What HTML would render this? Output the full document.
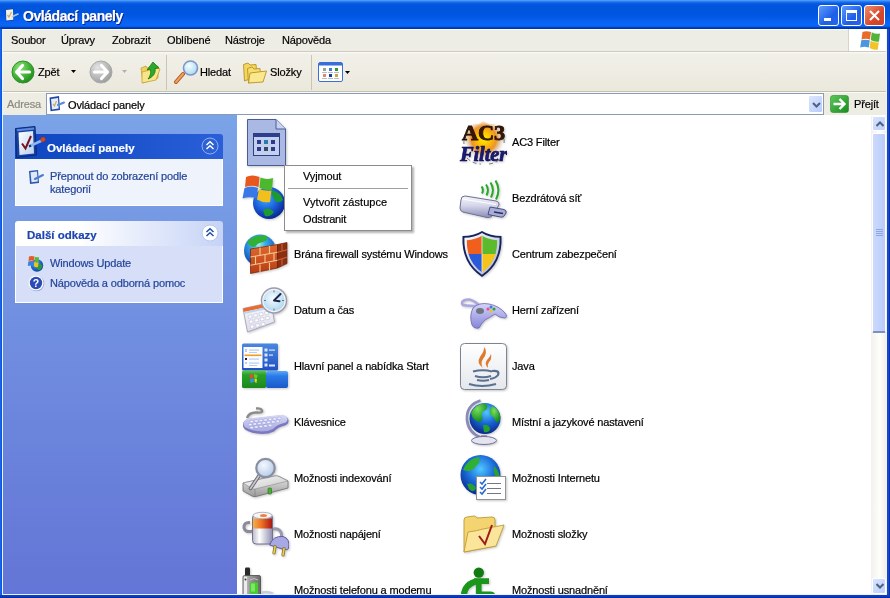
<!DOCTYPE html>
<html><head><meta charset="utf-8">
<style>
*{margin:0;padding:0;box-sizing:border-box}
html,body{width:890px;height:598px;overflow:hidden;background:#0054E3}
body{position:relative;font-family:"Liberation Sans",sans-serif;font-size:11px;color:#000;letter-spacing:-0.15px}
.a{position:absolute}
.t{position:absolute;white-space:nowrap;line-height:13px;will-change:transform;-webkit-text-stroke:0.2px currentColor}
#title{left:0;top:0;width:890px;height:29px;background:linear-gradient(#5aa4fc 0px,#3a8cf6 1px,#1a70ee 2px,#0a5ae2 3.5px,#0054dc 6px,#0056e0 15px,#0860f0 21px,#0a66f6 25px,#0a5cea 26.5px,#0040b8 27.5px,#0034a0 29px)}
#title .tt{left:23px;top:10px;color:#fff;font-weight:bold;font-size:14px;letter-spacing:-0.45px;text-shadow:1px 1px 0 #0a1e80}
.wb{position:absolute;top:5px;width:21px;height:21px;border:1px solid #fff;border-radius:3px}
#menu{left:2px;top:29px;width:885px;height:23px;background:#eeede5;box-shadow:inset 0 1px #fcfcfa;border-bottom:1px solid #cfccbf}
#menu .t{top:5px}
#tb{left:2px;top:52px;width:885px;height:40px;background:linear-gradient(#fbfaf6 0,#f1f0e8 2px,#eeece2 60%,#ebe9dc 95%);border-bottom:1px solid #c4c1b4}
#addr{left:2px;top:92px;width:885px;height:23px;background:#eeede4;box-shadow:inset 0 1px #fafaf6}
#left{left:2px;top:115px;width:235px;height:479px;background:linear-gradient(#7ba3e8,#6375d6)}
#list{left:237px;top:115px;width:633px;height:479px;background:#fff}
#sb{left:870px;top:115px;width:17px;height:479px;background:#fff}
#bottom{left:0;top:595px;width:890px;height:3px;background:linear-gradient(#1040c0,#0a38b8 60%,#0028a0)}
.it{position:absolute;top:0;width:48px;height:48px}
svg{will-change:transform}
</style></head><body>
<div id="title" class="a">
  <svg class="a" style="left:4px;top:7px" width="16" height="16" viewBox="0 0 16 16">
    <path d="M1.5 2.5 L9.5 1.5 L10 13.5 L2 14.5Z" fill="#1a3a9a" opacity=".7"/>
    <path d="M2 3 L9 2.2 L9.3 12.8 L2.3 13.6Z" fill="#f2f2ea"/>
    <path d="M3.5 8 L5 10 L7.5 5" fill="none" stroke="#c8b070" stroke-width="1.3"/>
    <path d="M8.5 9.5 L14 7" stroke="#a8c8f0" stroke-width="1.6" stroke-linecap="round"/>
  </svg>
  <div class="t tt">Ovládací panely</div>
  <div class="wb" style="left:818px;background:linear-gradient(135deg,#5e9bff,#1f5fe8 60%,#2a65ec)"><div class="a" style="left:5px;top:12px;width:7px;height:3px;background:#fff"></div></div>
  <div class="wb" style="left:841px;background:linear-gradient(135deg,#5e9bff,#1f5fe8 60%,#2a65ec)"><div class="a" style="left:4px;top:4px;width:11px;height:11px;border:1px solid #fff;border-top-width:3px"></div></div>
  <div class="wb" style="left:864px;background:linear-gradient(135deg,#f08d6c,#d6482b 60%,#cf4126)"><svg class="a" style="left:4px;top:4px" width="11" height="11"><path d="M1 1 L10 10 M10 1 L1 10" stroke="#fff" stroke-width="2.1"/></svg></div>
</div>
<div id="menu" class="a">
  <div class="t" style="left:9px">Soubor</div>
  <div class="t" style="left:59px">Úpravy</div>
  <div class="t" style="left:110px">Zobrazit</div>
  <div class="t" style="left:165px">Oblíbené</div>
  <div class="t" style="left:223px">Nástroje</div>
  <div class="t" style="left:280px">Nápověda</div>
  <div class="a" style="left:846px;top:0;width:39px;height:22px;background:#fff;border-left:1px solid #d8d4c4"></div>
  <svg class="a" style="left:855px;top:1px" width="24" height="20" viewBox="0 0 24 20">
    <path d="M5.5 2 Q9 0.5 14 2 L13 9.5 Q9 8 4.5 9.5Z" fill="#ea6a2a"/>
    <path d="M14.7 2.3 Q18.5 4.5 23 3.5 L22 11.5 Q17.5 12.5 13.8 10Z" fill="#52b43a"/>
    <path d="M4.3 10.3 Q8.5 9 12.8 10.3 L11.8 17.5 Q7.5 16 3.2 17.5Z" fill="#4a96e0"/>
    <path d="M13.6 10.8 Q17.5 13 21.8 12.2 L20.8 19.5 Q16.5 20.5 12.6 18Z" fill="#f2c42a"/>
  </svg>
</div>
<div id="tb" class="a">
  <svg class="a" style="left:9px;top:8px" width="24" height="24" viewBox="0 0 24 24">
    <defs><radialGradient id="gb" cx="35%" cy="30%" r="75%"><stop offset="0" stop-color="#8fe27a"/><stop offset=".55" stop-color="#46b53a"/><stop offset="1" stop-color="#1f8a1e"/></radialGradient></defs>
    <circle cx="12" cy="12" r="11" fill="url(#gb)" stroke="#2f8f2a" stroke-width="1"/>
    <path d="M11.5 5.5 L5.5 12 L11.5 18.5 M6 12 H18.5" fill="none" stroke="#fff" stroke-width="3.2" stroke-linecap="round" stroke-linejoin="round"/>
  </svg>
  <div class="t" style="left:36px;top:14px">Zpět</div>
  <svg class="a" style="left:69px;top:18px" width="5" height="3"><path d="M0 0H5L2.5 3Z" fill="#000"/></svg>
  <svg class="a" style="left:87px;top:8px" width="24" height="24" viewBox="0 0 24 24">
    <defs><radialGradient id="gf" cx="35%" cy="30%" r="75%"><stop offset="0" stop-color="#e4e4e4"/><stop offset=".6" stop-color="#b9b9b9"/><stop offset="1" stop-color="#9a9a9a"/></radialGradient></defs>
    <circle cx="12" cy="12" r="11" fill="url(#gf)" stroke="#a8a8a8" stroke-width="1"/>
    <path d="M12.5 5.5 L18.5 12 L12.5 18.5 M18 12 H5.5" fill="none" stroke="#fff" stroke-width="3.2" stroke-linecap="round" stroke-linejoin="round"/>
  </svg>
  <svg class="a" style="left:120px;top:18px" width="5" height="3"><path d="M0 0H5L2.5 3Z" fill="#b0b0b0"/></svg>
  <svg class="a" style="left:137px;top:8px" width="22" height="24" viewBox="0 0 22 24">
    <path d="M2 8 L7 6 L8 8 L19 6 L19 18 L4 23 Z" fill="#f0d060" stroke="#c8a030" stroke-width=".8"/>
    <path d="M3 12 L19 8 L21 9 L17 20 L3 23 Z" fill="#f8e48a" stroke="#c8a030" stroke-width=".8"/>
    <path d="M9 19 C12 15 12 12 11 9 L8 10 L14 2 L20 8 L16 8.5 C17 13 14 17 9 19Z" fill="#2ea82a" stroke="#137a13" stroke-width=".8"/>
  </svg>
  <div class="a" style="left:164px;top:3px;width:1px;height:35px;background:#c8c5b5"></div>
  <svg class="a" style="left:169px;top:8px" width="28" height="24" viewBox="0 0 28 24">
    <defs><radialGradient id="gl" cx="40%" cy="35%" r="70%"><stop offset="0" stop-color="#f4ffff"/><stop offset="1" stop-color="#a9d6f0"/></radialGradient></defs>
    <path d="M5 22 L12 14" stroke="#b05a20" stroke-width="4" stroke-linecap="round"/>
    <path d="M5 22 L12 14" stroke="#f0a060" stroke-width="2" stroke-linecap="round"/>
    <circle cx="19.5" cy="8" r="7" fill="url(#gl)" stroke="#7d95c9" stroke-width="1.6"/>
  </svg>
  <div class="t" style="left:198px;top:14px">Hledat</div>
  <svg class="a" style="left:240px;top:10px" width="26" height="22" viewBox="0 0 26 22">
    <path d="M1.5 2.5 L6 1 L8 3 L14 2.5 L15 14 L2.5 19Z" fill="#f2d660" stroke="#b8921e" stroke-width=".9"/>
    <path d="M5.5 6.5 L10 5 L12 7 L18 6.5 L19 17 L6.5 21Z" fill="#f6de72" stroke="#b8921e" stroke-width=".9"/>
    <path d="M8 11 L24.5 9 L21 20 L6.5 21Z" fill="#fbe88e" stroke="#b8921e" stroke-width=".9"/>
  </svg>
  <div class="t" style="left:268px;top:14px">Složky</div>
  <div class="a" style="left:309px;top:3px;width:1px;height:35px;background:#c8c5b5"></div>
  <svg class="a" style="left:316px;top:10px" width="25" height="20" viewBox="0 0 25 20">
    <rect x=".5" y=".5" width="24" height="19" rx="1.5" fill="#fff" stroke="#3a6fd8"/>
    <rect x="1" y="1" width="23" height="2.5" fill="#3a6fd8"/>
    <rect x="5" y="6" width="3" height="3" fill="#9aa0a0"/><rect x="11" y="6" width="3" height="3" fill="#3c7ee0"/><rect x="17" y="6" width="3" height="3" fill="#2e9a2e"/>
    <rect x="5" y="12" width="3" height="3" fill="#d88a6a"/><rect x="11" y="12" width="3" height="3" fill="#1a3f9a"/><rect x="17" y="12" width="3" height="3" fill="#c0a850"/>
    <rect x="4" y="10" width="5" height=".8" fill="#aab"/><rect x="10" y="10" width="5" height=".8" fill="#aab"/><rect x="16" y="10" width="5" height=".8" fill="#aab"/>
    <rect x="4" y="16" width="5" height=".8" fill="#aab"/><rect x="10" y="16" width="5" height=".8" fill="#aab"/><rect x="16" y="16" width="5" height=".8" fill="#aab"/>
  </svg>
  <svg class="a" style="left:343px;top:19px" width="5" height="3"><path d="M0 0H5L2.5 3Z" fill="#000"/></svg>
</div>
<div id="addr" class="a">
  <div class="t" style="left:5px;top:6px;color:#8c8a80">Adresa</div>
  <div class="a" style="left:44px;top:1px;width:778px;height:22px;background:#fff;border:1px solid #8a9cb4"></div>
  <svg class="a" style="left:46px;top:3px" width="18" height="17" viewBox="0 0 18 17">
    <path d="M1.5 2.5 L11 1 L12 15 L2.5 16.2Z" fill="#2048a8"/>
    <path d="M3 4 L10 3 L10.7 13.6 L4 14.5Z" fill="#e4eefa"/>
    <path d="M5 9 L6.5 11 L8.5 6" fill="none" stroke="#d0b060" stroke-width="1.3"/>
    <path d="M10 10 L16 7.5" stroke="#5a8ad8" stroke-width="2" stroke-linecap="round"/>
  </svg>
  <div class="t" style="left:66px;top:7px">Ovládací panely</div>
  <div class="a" style="left:806px;top:3px;width:15px;height:18px;border-radius:2px;background:linear-gradient(135deg,#dce6fd,#b8ccfa);border:1px solid #fff"><svg class="a" style="left:3px;top:6px" width="9" height="6"><path d="M1 1 L4.5 4.5 L8 1" fill="none" stroke="#4d6185" stroke-width="2"/></svg></div>
  <svg class="a" style="left:828px;top:3px" width="19" height="18" viewBox="0 0 19 18">
    <defs><linearGradient id="gog" x1="0" y1="0" x2="1" y2="1"><stop offset="0" stop-color="#5cc85a"/><stop offset="1" stop-color="#1a8a20"/></linearGradient></defs>
    <rect x=".5" y=".5" width="18" height="17" rx="2.5" fill="url(#gog)" stroke="#2a8a2a" stroke-width=".6"/>
    <path d="M3.5 9 H14 M9.5 4 L14.5 9 L9.5 14" fill="none" stroke="#fff" stroke-width="2.4"/>
  </svg>
  <div class="t" style="left:852px;top:6px">Přejít</div>
</div>
<div id="left" class="a">
  <div class="a" style="left:13px;top:19px;width:208px;height:25px;background:linear-gradient(90deg,#0c45c0,#2a5fd8);border-radius:3px 3px 0 0"></div>
  <svg class="a" style="left:11px;top:10px" width="36" height="34" viewBox="0 0 36 34">
    <defs><linearGradient id="tabp" x1="0" y1="0" x2="1" y2="1"><stop offset="0" stop-color="#ffffff"/><stop offset="1" stop-color="#b8d0f0"/></linearGradient></defs>
    <path d="M2.5 3.5 L22 1.5 L23.5 30 L3.5 32.5Z" fill="#1840a0" stroke="#0a2878" stroke-width="1"/>
    <path d="M3.5 4.2 L21 2.5 L21.3 4.5 L4.5 6.2Z" fill="#5a8ae0"/>
    <path d="M5.5 7.5 L20 6 L21 28.5 L6.5 30Z" fill="url(#tabp)"/>
    <path d="M9 18.5 L12.5 23.5 L18 11" fill="none" stroke="#7a1020" stroke-width="2"/>
    <path d="M17 21 L30 15" stroke="#8ab8f0" stroke-width="2.6" stroke-linecap="round"/>
    <path d="M16 21.5 L18 20.5" stroke="#10306a" stroke-width="2"/>
    <circle cx="30" cy="14.5" r="2.4" fill="#d04a28" stroke="#a82a18" stroke-width=".6"/>
  </svg>
  <div class="t" style="left:45px;top:27px;color:#fff;font-weight:bold;font-size:11.5px;letter-spacing:0">Ovládací panely</div>
  <svg class="a" style="left:199px;top:22px" width="18" height="18" viewBox="0 0 18 18">
    <circle cx="9" cy="9" r="8" fill="#2d62d6" stroke="#8fb0f0" stroke-width="1"/>
    <path d="M5.5 8 L9 4.8 L12.5 8 M5.5 12 L9 8.8 L12.5 12" fill="none" stroke="#fff" stroke-width="1.5"/>
  </svg>
  <div class="a" style="left:13px;top:44px;width:208px;height:47px;background:#eff3fb;border:1px solid #fff;border-top:0"></div>
  <svg class="a" style="left:25px;top:54px" width="18" height="16" viewBox="0 0 18 16">
    <path d="M2 2 L11 1 L12 14 L3 15 Z" fill="#2a58b0"/>
    <path d="M3.5 3.2 L10 2.5 L10.8 12.5 L4.5 13.2Z" fill="#dfe8f6"/>
    <path d="M8 10 L16 6" stroke="#4a7ad0" stroke-width="2" stroke-linecap="round"/>
  </svg>
  <div class="t" style="left:48px;top:55px;color:#24449a;line-height:13px">Přepnout do zobrazení podle<br>kategorií</div>

  <div class="a" style="left:13px;top:106px;width:208px;height:25px;background:linear-gradient(90deg,#fff 30%,#c6d3f7);border-radius:3px 3px 0 0"></div>
  <div class="t" style="left:25px;top:114px;color:#1e44b0;font-weight:bold;font-size:11.5px;letter-spacing:0">Další odkazy</div>
  <svg class="a" style="left:199px;top:109px" width="18" height="18" viewBox="0 0 18 18">
    <circle cx="9" cy="9" r="8" fill="#fff" stroke="#b8c8e8" stroke-width="1"/>
    <path d="M5.5 8 L9 4.8 L12.5 8 M5.5 12 L9 8.8 L12.5 12" fill="none" stroke="#1f4ea8" stroke-width="1.5"/>
  </svg>
  <div class="a" style="left:13px;top:131px;width:208px;height:57px;background:#d6dff7;border:1px solid #fff;border-top:0"></div>
  <svg class="a" style="left:25px;top:140px" width="17" height="17" viewBox="0 0 17 17">
    <defs><radialGradient id="wus" cx="40%" cy="35%" r="70%"><stop offset="0" stop-color="#40a8f0"/><stop offset="1" stop-color="#0a3aa8"/></radialGradient></defs>
    <circle cx="10" cy="10.5" r="6.2" fill="url(#wus)"/>
    <path d="M8 10 Q11 8 15.5 10 Q15 14 12 15.5 Q9 14 8 10Z" fill="#2a9a3a"/>
    <path d="M2 1.5 Q4.5 0.5 7.5 1.5 L7 6 Q4.5 5 1.5 6Z" fill="#e85a28"/>
    <path d="M8 1.7 Q10 2.7 12 2 L11.5 7 Q9.5 7.5 7.5 6.3Z" fill="#58b830"/>
    <path d="M1.3 6.5 Q4 5.5 6.8 6.5 L6.3 11 Q3.5 10 0.8 11Z" fill="#3a80e0"/>
    <path d="M7.3 6.7 Q9.5 7.8 11.5 7.5 L11 12 Q9 12.5 6.8 11.3Z" fill="#f2c020"/>
  </svg>
  <div class="t" style="left:48px;top:142px;color:#24449a">Windows Update</div>
  <svg class="a" style="left:25px;top:159px" width="18" height="18" viewBox="0 0 18 18">
    <circle cx="9.5" cy="9.5" r="7.8" fill="#6a7ab0" opacity=".6"/>
    <circle cx="9" cy="9" r="7.6" fill="#fff"/>
    <circle cx="9" cy="9" r="6.2" fill="#2a4cb4"/>
    <text x="9" y="12.8" text-anchor="middle" font-family="Liberation Sans" font-weight="bold" font-size="10.5" fill="#fff">?</text>
  </svg>
  <div class="t" style="left:48px;top:162px;color:#24449a">Nápověda a odborná pomoc</div>
</div>
<div id="list" class="a" style="overflow:hidden">
<svg class="a" style="left:4px;top:3px;filter:drop-shadow(1px 1.5px 1px rgba(0,0,0,.22))" width="48" height="48" viewBox="0 0 48 48">
<path d="M6.5 1.5 H35 L44.5 11 V47.5 H6.5 Z" fill="#a9b9e4" stroke="#4b5c94"/>
<path d="M35 1.5 V11 H44.5" fill="#c7d3f0" stroke="#4b5c94"/>
<rect x="12.5" y="15.5" width="26" height="22" fill="#c3cfee" stroke="#2e3f80"/>
<rect x="13" y="16" width="25" height="3" fill="#2b3f90"/>
<g fill="#2f3a8a"><rect x="16" y="22" width="4" height="4"/><rect x="23" y="22" width="4" height="4" fill="#2a7ab0"/><rect x="30" y="22" width="4" height="4"/>
<rect x="16" y="29" width="4" height="4"/><rect x="23" y="29" width="4" height="4" fill="#3a4a60"/><rect x="30" y="29" width="4" height="4"/></g>
</svg>
<svg class="a" style="left:222px;top:3px;filter:drop-shadow(1px 1.5px 1px rgba(0,0,0,.22))" width="48" height="48" viewBox="0 0 48 48">
<defs><radialGradient id="ac3f" cx="50%" cy="45%" r="50%"><stop offset="0" stop-color="#fff200"/><stop offset=".35" stop-color="#ffc000"/><stop offset=".65" stop-color="#f08a10" stop-opacity=".85"/><stop offset=".9" stop-color="#f8c890" stop-opacity=".3"/><stop offset="1" stop-color="#fff" stop-opacity="0"/></radialGradient></defs>
<path d="M6 22 Q4 10 14 5 Q20 8 24 3 Q30 8 36 5 Q46 12 44 24 Q46 34 38 40 Q30 44 24 42 Q14 44 8 36 Q4 30 6 22Z" fill="url(#ac3f)"/>
<path d="M9 10 Q4 18 5 26 M40 8 Q46 16 45 26 M8 40 Q14 46 22 46 M30 46 Q38 45 42 40" fill="none" stroke="#444" stroke-width=".7" stroke-dasharray="4 3"/>
<text x="3" y="22" textLength="43" lengthAdjust="spacingAndGlyphs" font-family="Liberation Serif" font-weight="bold" font-size="21" fill="#3a1606" stroke="#241000" stroke-width=".8">AC3</text>
<text x="1" y="43" textLength="47" lengthAdjust="spacingAndGlyphs" font-family="Liberation Serif" font-weight="bold" font-style="italic" font-size="22" fill="#1a1a78" stroke="#0c0c50" stroke-width=".7">Filter</text>
</svg>
<div class="t" style="left:275px;top:21px">AC3 Filter</div>
<svg class="a" style="left:4px;top:59px;filter:drop-shadow(1px 1.5px 1px rgba(0,0,0,.22))" width="48" height="48" viewBox="0 0 48 48">
<defs><radialGradient id="wug" cx="40%" cy="35%" r="65%"><stop offset="0" stop-color="#3ab0ff"/><stop offset=".6" stop-color="#1a5ad8"/><stop offset="1" stop-color="#0a2a90"/></radialGradient></defs>
<circle cx="28" cy="29" r="16" fill="url(#wug)"/>
<path d="M30 16 Q40 18 42 26 Q38 30 34 27 Q31 22 30 16Z M22 36 Q28 32 33 38 Q30 43 24 42Z" fill="#1a9a30"/>
<path d="M5 3 Q11 0 18.5 3 L17.5 13 Q11 10.5 4 13Z" fill="#e8571c"/>
<path d="M19.5 3.5 Q25 6 32 4 L31 15.5 Q25 17 18.5 14Z" fill="#4cb82c"/>
<path d="M3.5 14 Q10 11.5 17 14 L15.5 24.5 Q9 22 1.5 24.5Z" fill="#3a78e8"/>
<path d="M18 15 Q24 17.5 30.5 16.5 L29 28 Q22 29 16 25.5Z" fill="#f2c01c"/>
</svg>
<svg class="a" style="left:222px;top:59px;filter:drop-shadow(1px 1.5px 1px rgba(0,0,0,.22))" width="48" height="48" viewBox="0 0 48 48">
<defs><linearGradient id="usbg" x1="0" y1="0" x2="0" y2="1"><stop offset="0" stop-color="#f8f8fc"/><stop offset=".45" stop-color="#d4d5ea"/><stop offset="1" stop-color="#8a8db8"/></linearGradient></defs>
<path d="M2 26 Q2 22 6 22 L37 27 Q41 28 40 31 L33 42 Q31 44 28 43.5 L4 38 Q1 37 1 34Z" fill="url(#usbg)" stroke="#6e7094" stroke-width="1"/>
<path d="M3 25 L37 30.5" stroke="#ffffff" stroke-width="1"/>
<path d="M31 33 L45 35.5 Q48 36.5 47 39 L45 42 Q44 43.5 41.5 43 L29 40.5Z" fill="#a8acd8" stroke="#4a4e7a" stroke-width="1"/>
<path d="M35 38 L44 39.5" stroke="#2a2e5a" stroke-width="1.5"/>
<g fill="none" stroke="#28a828" stroke-width="2">
<path d="M22.5 12.5 Q25 15.5 23 19.5"/><path d="M27 10.5 Q30.5 15.5 27.5 21.5"/><path d="M31.5 8.5 Q36 15.5 32 23.5"/><path d="M36.5 6.5 Q42 15.5 37 25.5"/></g>
</svg>
<div class="t" style="left:275px;top:77px">Bezdrátová síť</div>
<svg class="a" style="left:4px;top:115px;filter:drop-shadow(1px 1.5px 1px rgba(0,0,0,.22))" width="48" height="48" viewBox="0 0 48 48">
<defs><radialGradient id="fwg" cx="45%" cy="30%" r="70%"><stop offset="0" stop-color="#b0f0d8"/><stop offset=".3" stop-color="#38b0f0"/><stop offset="1" stop-color="#0c3cb0"/></radialGradient>
<linearGradient id="fwf" x1="0" y1="0" x2="0" y2="1"><stop offset="0" stop-color="#e06a30"/><stop offset="1" stop-color="#b83c14"/></linearGradient></defs>
<circle cx="19" cy="20.5" r="16" fill="url(#fwg)"/>
<path d="M6 12 Q14 3 26 6 Q28 10 22 12 Q16 13 14 17 Q9 17 6 12Z" fill="#30b038"/>
<path d="M9.5 19 L36.5 14.5 L46 12.5 L20 17Z" fill="#fcd490"/>
<path d="M9.5 19 L36.5 14.5 L36.5 38 L9.5 43.5Z" fill="url(#fwf)"/>
<path d="M36.5 14.5 L46 12.5 L46 33.5 L36.5 38Z" fill="#8e2e10"/>
<path d="M9.5 19 L36.5 14.5 L36.5 38 L9.5 43.5Z M36.5 14.5 L46 12.5 L46 33.5 L36.5 38Z" fill="none" stroke="#6a2008" stroke-width=".7"/>
<g stroke="#f8c890" stroke-width="1.1" fill="none">
<path d="M9.5 27 L36.5 22.3 M9.5 35.2 L36.5 30.2"/>
<path d="M19 17.4 V25.3 M28.5 15.9 V23.8 M14.5 26.2 V34.3 M24 24.6 V32.7 M33 23 V31 M19 34.4 V42.5 M28.5 32.8 V40.7"/></g>
<g stroke="#c86a40" stroke-width="1"><path d="M36.5 22.3 L46 19.8 M36.5 30.2 L46 27.2 M41 14 V21 M41 28.5 V35.5"/></g>
</svg>
<div class="t" style="left:57px;top:133px">Brána firewall systému Windows</div>
<svg class="a" style="left:222px;top:115px;filter:drop-shadow(1px 1.5px 1px rgba(0,0,0,.22))" width="48" height="48" viewBox="0 0 48 48">
<defs><linearGradient id="shr" x1="0" y1="0" x2="1" y2="1"><stop offset="0" stop-color="#ffffff"/><stop offset="1" stop-color="#a8b0d0"/></linearGradient></defs>
<path d="M23 1 Q31 6 42.5 6 Q44 33 23 47 Q2 33 3.5 6 Q15 6 23 1Z" fill="#16245e"/>
<path d="M23 3 Q30.5 7.8 40.6 7.8 Q41.5 32 23 44.8 Q4.5 32 5.4 7.8 Q15.5 7.8 23 3Z" fill="url(#shr)"/>
<path d="M23 5.8 Q16.5 9.8 7.8 10.2 Q7.6 17.5 9.5 24 H23Z" fill="#f0601c"/>
<path d="M23 5.8 Q29.5 9.8 38.2 10.2 Q38.4 17.5 36.5 24 H23Z" fill="#5cba2c"/>
<path d="M9.5 24 Q12.8 35.5 23 42.3 V24Z" fill="#2a5ad8"/>
<path d="M36.5 24 Q33.2 35.5 23 42.3 V24Z" fill="#f4c41a"/>
<path d="M23 5.8 V42.3" stroke="#e8ecf8" stroke-width=".8"/>
</svg>
<div class="t" style="left:275px;top:133px">Centrum zabezpečení</div>
<svg class="a" style="left:4px;top:171px;filter:drop-shadow(1px 1.5px 1px rgba(0,0,0,.22))" width="48" height="48" viewBox="0 0 48 48">
<defs><radialGradient id="dtc" cx="45%" cy="40%" r="60%"><stop offset="0" stop-color="#f8fcff"/><stop offset="1" stop-color="#b0d8f0"/></radialGradient>
<linearGradient id="dtp" x1="0" y1="0" x2="0" y2="1"><stop offset="0" stop-color="#fafafe"/><stop offset="1" stop-color="#dcdcea"/></linearGradient></defs>
<path d="M2 22.5 L30 16.5 L33.5 36 L6.5 46Z" fill="url(#dtp)" stroke="#9a9cb4" stroke-width=".8"/>
<path d="M2 22.5 L30 16.5 L30.7 20 L2.7 26Z" fill="#ee6a2a"/>
<path d="M2.7 26 L30.7 20 L31 22 L3 28Z" fill="#b8d4f0"/>
<g fill="#fff" stroke="#c4c4dc" stroke-width=".6"><rect x="7" y="29.5" width="3.6" height="3" transform="rotate(-12 7 29.5)"/><rect x="12.5" y="28.3" width="3.6" height="3" transform="rotate(-12 12.5 28.3)"/><rect x="18" y="27.1" width="3.6" height="3" transform="rotate(-12 18 27.1)"/><rect x="23.5" y="25.9" width="3.6" height="3" transform="rotate(-12 23.5 25.9)"/>
<rect x="8" y="34.5" width="3.6" height="3" transform="rotate(-12 8 34.5)"/><rect x="13.5" y="33.3" width="3.6" height="3" transform="rotate(-12 13.5 33.3)"/><rect x="19" y="32.1" width="3.6" height="3" transform="rotate(-12 19 32.1)"/><rect x="24.5" y="30.9" width="3.6" height="3" transform="rotate(-12 24.5 30.9)"/>
<rect x="9" y="39.5" width="3.6" height="3" transform="rotate(-12 9 39.5)"/><rect x="14.5" y="38.3" width="3.6" height="3" transform="rotate(-12 14.5 38.3)"/><rect x="20" y="37.1" width="3.6" height="3" transform="rotate(-12 20 37.1)"/></g>
<circle cx="33" cy="14.5" r="13.2" fill="#9a9caa"/>
<circle cx="33" cy="14.5" r="11.8" fill="#f4f4f8"/>
<circle cx="33" cy="14.5" r="10.6" fill="url(#dtc)"/>
<g fill="#6a7090"><rect x="32.5" y="4.5" width="1" height="2"/><rect x="32.5" y="22.5" width="1" height="2"/><rect x="23" y="14" width="2" height="1"/><rect x="41" y="14" width="2" height="1"/></g>
<path d="M33 14.5 L39.5 8 M33 14.5 L38.5 15.2" stroke="#1a2848" stroke-width="2" stroke-linecap="round"/>
</svg>
<div class="t" style="left:57px;top:189px">Datum a čas</div>
<svg class="a" style="left:222px;top:171px;filter:drop-shadow(1px 1.5px 1px rgba(0,0,0,.22))" width="48" height="48" viewBox="0 0 48 48">
<defs><linearGradient id="gpg" x1="0" y1="0" x2="0" y2="1"><stop offset="0" stop-color="#d4d4fa"/><stop offset="1" stop-color="#8686d8"/></linearGradient></defs>
<path d="M20 19 Q12 12 6 14 Q1 16 4 19 Q10 20 20 20" fill="none" stroke="#a9a6e0" stroke-width="2.5"/>
<path d="M14 22 Q20 16 30 18 Q40 20 46 27 Q49 31 46 32 Q40 32 36 28 Q30 32 26 34 Q22 38 20 42 Q15 43 13 39 Q10 30 14 22Z" fill="url(#gpg)" stroke="#6a68b0" stroke-width=".8"/>
<ellipse cx="21" cy="25" rx="4" ry="3" fill="#707480"/>
<circle cx="29" cy="23" r="1.5" fill="#e84a8a"/><circle cx="32" cy="21" r="1.5" fill="#3a7ae0"/><circle cx="32" cy="25" r="1.5" fill="#f0c020"/><circle cx="35" cy="23" r="1.5" fill="#2aa02a"/>
</svg>
<div class="t" style="left:275px;top:189px">Herní zařízení</div>
<svg class="a" style="left:4px;top:227px;filter:drop-shadow(1px 1.5px 1px rgba(0,0,0,.22))" width="48" height="48" viewBox="0 0 48 48">
<defs><linearGradient id="tkb" x1="0" y1="0" x2="0" y2="1"><stop offset="0" stop-color="#5aa8f8"/><stop offset=".3" stop-color="#2a7ae8"/><stop offset="1" stop-color="#1a58c8"/></linearGradient>
<linearGradient id="tkg" x1="0" y1="0" x2="0" y2="1"><stop offset="0" stop-color="#5ac85a"/><stop offset=".25" stop-color="#2aa02a"/><stop offset="1" stop-color="#1a8a1a"/></linearGradient>
<linearGradient id="tkm" x1="0" y1="0" x2="0" y2="1"><stop offset="0" stop-color="#4a88e0"/><stop offset="1" stop-color="#2050c0"/></linearGradient></defs>
<rect x="1" y="1.5" width="36" height="27" rx="1.5" fill="url(#tkm)"/>
<rect x="2.5" y="5" width="19" height="21" fill="#fafcff"/>
<rect x="3.5" y="12.5" width="17" height="1.6" fill="#f0a020"/>
<g fill="#b8cef0"><rect x="4" y="7" width="2" height="3"/><rect x="8" y="7.5" width="10" height="1.2"/><rect x="8" y="10" width="8" height="1"/><rect x="4" y="16" width="2" height="2" fill="#222"/><rect x="8" y="16.5" width="10" height="1.2"/><rect x="4" y="20" width="2" height="2"/><rect x="8" y="20.5" width="10" height="1.2"/><rect x="8" y="23" width="8" height="1"/></g>
<g fill="#d8e6ff"><rect x="23.5" y="6.5" width="3" height="3"/><rect x="23.5" y="11.5" width="3" height="3"/><rect x="23.5" y="16.5" width="3" height="3"/><rect x="23.5" y="21.5" width="3" height="3"/><rect x="28" y="7.5" width="6" height="1.2"/><rect x="28" y="12.5" width="4" height="1.2"/><rect x="28" y="22.5" width="6" height="2"/></g>
<rect x="1" y="28.5" width="24" height="17.5" rx="1.5" fill="url(#tkg)"/>
<rect x="25" y="29" width="22" height="17" rx="2" fill="url(#tkb)"/>
<path d="M8.5 33 L12 32 L12.5 35.5 L9 36.5Z" fill="#e84a2a"/><path d="M12.8 32 L16.5 33 L16 36.5 L13.3 35.5Z" fill="#6acc2a"/>
<path d="M9 37.3 L12.6 36.3 L13 40 L9.5 41Z" fill="#3a8af0"/><path d="M13.5 36.3 L16 37.3 L15.5 41 L13.8 40Z" fill="#f8d020"/>
</svg>
<div class="t" style="left:57px;top:245px">Hlavní panel a nabídka Start</div>
<svg class="a" style="left:222px;top:227px;filter:drop-shadow(1px 1.5px 1px rgba(0,0,0,.22))" width="48" height="48" viewBox="0 0 48 48">
<defs><linearGradient id="jvg" x1="0" y1="0" x2="0" y2="1"><stop offset="0" stop-color="#ffffff"/><stop offset="1" stop-color="#e4e7ec"/></linearGradient></defs>
<rect x="1.5" y="1.5" width="46" height="46" rx="4" fill="url(#jvg)" stroke="#7c8490"/>
<path d="M24 26 Q17 21 21 15 Q25 10 25.5 5 Q29 11 24 17 Q21 21 24 26Z" fill="#e07a2c"/>
<path d="M29 26 Q25 22 28 18 Q31 15 32 12 Q33 17 30 20 Q28 23 29 26Z" fill="#e07a2c"/>
<g fill="none" stroke="#5a7090" stroke-width="2.2">
<path d="M14 29.5 Q24 27 33 29.5"/><path d="M16 34 Q24 36.5 32 34"/><path d="M18 38 Q24 39.5 30 38"/><path d="M10 42 Q23 46 37 42"/><path d="M33 29 Q41 28 39 33 Q37 36 31 37"/></g>
</svg>
<div class="t" style="left:275px;top:245px">Java</div>
<svg class="a" style="left:4px;top:283px;filter:drop-shadow(1px 1.5px 1px rgba(0,0,0,.22))" width="48" height="48" viewBox="0 0 48 48">
<defs><linearGradient id="kbg" x1="0" y1="0" x2="0" y2="1"><stop offset="0" stop-color="#d8d8f6"/><stop offset="1" stop-color="#a8a8e0"/></linearGradient></defs>
<path d="M6 20 Q8 14 16 14.5 Q22 15 21 12.5 Q20 10 15 10.5" fill="none" stroke="#8a8c88" stroke-width="2.4"/>
<path d="M2 27 Q2 22 8 21 L39 17.5 Q46 17 47.5 22 Q48 26 44 27.5 Q37 29 33 33.5 Q28 36 21 36 Q10 35.5 4 31.5 Q1.5 29.5 2 27Z" fill="#7a78c0"/>
<path d="M2.5 25.5 Q3 21.5 8 20.5 L39 17 Q45.5 16.5 46.5 21 Q46.5 24 43 25 Q36 26.5 32 31 Q27 33.5 21 33.5 Q10 33 4.5 29.5 Q2.5 28 2.5 25.5Z" fill="url(#kbg)"/>
<g fill="#f4f4ff" stroke="#8890d0" stroke-width=".4"><rect x="9.0" y="22.5" width="3.4" height="2.2" rx=".4"/><rect x="13.6" y="21.9" width="3.4" height="2.2" rx=".4"/><rect x="18.2" y="21.4" width="3.4" height="2.2" rx=".4"/><rect x="22.8" y="20.9" width="3.4" height="2.2" rx=".4"/><rect x="27.4" y="20.3" width="3.4" height="2.2" rx=".4"/><rect x="32.0" y="19.8" width="3.4" height="2.2" rx=".4"/><rect x="36.6" y="19.2" width="3.4" height="2.2" rx=".4"/><rect x="7.5" y="25.5" width="3.4" height="2.2" rx=".4"/><rect x="12.1" y="24.9" width="3.4" height="2.2" rx=".4"/><rect x="16.7" y="24.4" width="3.4" height="2.2" rx=".4"/><rect x="21.3" y="23.9" width="3.4" height="2.2" rx=".4"/><rect x="25.9" y="23.3" width="3.4" height="2.2" rx=".4"/><rect x="30.5" y="22.8" width="3.4" height="2.2" rx=".4"/><rect x="35.1" y="22.2" width="3.4" height="2.2" rx=".4"/><rect x="9.0" y="28.5" width="3.4" height="2.2" rx=".4"/><rect x="13.6" y="27.9" width="3.4" height="2.2" rx=".4"/><rect x="18.2" y="27.4" width="3.4" height="2.2" rx=".4"/><rect x="22.8" y="26.9" width="3.4" height="2.2" rx=".4"/><rect x="27.4" y="26.3" width="3.4" height="2.2" rx=".4"/></g>
</svg>
<div class="t" style="left:57px;top:301px">Klávesnice</div>
<svg class="a" style="left:222px;top:283px;filter:drop-shadow(1px 1.5px 1px rgba(0,0,0,.22))" width="48" height="48" viewBox="0 0 48 48">
<defs><radialGradient id="glg" cx="55%" cy="30%" r="70%"><stop offset="0" stop-color="#50c8ff"/><stop offset=".5" stop-color="#1a68d8"/><stop offset="1" stop-color="#0a2888"/></radialGradient>
<radialGradient id="gll" cx="40%" cy="30%" r="70%"><stop offset="0" stop-color="#7ae05a"/><stop offset="1" stop-color="#128a20"/></radialGradient></defs>
<path d="M21.5 2.5 Q7 7 8 22 Q9.5 35 22 39.5" fill="none" stroke="#8a8ab8" stroke-width="2.6"/>
<rect x="22" y="37" width="6" height="4" fill="#9a9ac0"/>
<ellipse cx="25" cy="42.5" rx="12.5" ry="4" fill="#e4e4ee" stroke="#70709a"/>
<circle cx="26" cy="20.5" r="15.5" fill="url(#glg)"/>
<path d="M12 15 Q16 6 26 5.5 Q30 8 27 12 Q22 13 23 18 Q25 22 20 24 Q14 23 12 15Z" fill="url(#gll)"/>
<path d="M33 8 Q40 11 41.5 19 Q40 26 37 24 Q35 19 31 16 Q30 11 33 8Z" fill="url(#gll)"/>
<path d="M24 27 Q30 26 31 31 Q30 35 25 34Z" fill="#22a030"/>
</svg>
<div class="t" style="left:275px;top:301px">Místní a jazykové nastavení</div>
<svg class="a" style="left:4px;top:339px;filter:drop-shadow(1px 1.5px 1px rgba(0,0,0,.22))" width="48" height="48" viewBox="0 0 48 48">
<defs><linearGradient id="idg" x1="0" y1="0" x2="0" y2="1"><stop offset="0" stop-color="#e8e8e8"/><stop offset="1" stop-color="#9a9a9a"/></linearGradient>
<linearGradient id="idt" x1="0" y1="0" x2="1" y2="1"><stop offset="0" stop-color="#fafafa"/><stop offset="1" stop-color="#c8c8c8"/></linearGradient>
<radialGradient id="idl" cx="40%" cy="35%" r="65%"><stop offset="0" stop-color="#f4f8ff"/><stop offset="1" stop-color="#b8cce8"/></radialGradient></defs>
<path d="M2 29 L34 22 Q36 21.5 38 22.5 L47 27 L47 34 L15 42.5 Q13 43 11 42 L2 37Z" fill="url(#idg)" stroke="#6e6e6e" stroke-width=".8"/>
<path d="M2 29 L34 22 Q36 21.5 38 22.5 L47 27 L14 35 Q12.5 35.3 11 34.5Z" fill="url(#idt)" stroke="#8a8a8a" stroke-width=".6"/>
<path d="M14 35 V42.5" stroke="#7a7a7a" stroke-width=".6"/>
<rect x="27" y="34" width="3.5" height="6" rx="1" fill="#4ab030" stroke="#2a6a20" stroke-width=".6"/>
<path d="M18.5 21 L9.5 34.5" stroke="#6a6a70" stroke-width="3.6" stroke-linecap="round"/>
<path d="M18.5 21 L9.5 34.5" stroke="#c8c8d0" stroke-width="1.6" stroke-linecap="round"/>
<circle cx="24.5" cy="14" r="9.2" fill="url(#idl)" stroke="#8890a0" stroke-width="2.2"/>
</svg>
<div class="t" style="left:57px;top:357px">Možnosti indexování</div>
<svg class="a" style="left:222px;top:339px;filter:drop-shadow(1px 1.5px 1px rgba(0,0,0,.22))" width="48" height="48" viewBox="0 0 48 48">
<defs><radialGradient id="ing" cx="50%" cy="35%" r="65%"><stop offset="0" stop-color="#50c8ff"/><stop offset=".55" stop-color="#1a68d8"/><stop offset="1" stop-color="#0a2a90"/></radialGradient></defs>
<circle cx="21.5" cy="21" r="20" fill="url(#ing)"/>
<path d="M4 16 Q8 5 20 3 Q22 8 17 12 Q13 18 8 17Z" fill="#30b030"/>
<path d="M35 12 Q40 16 41 24 L37 24 Q34 18 35 12Z M8 30 Q14 28 17 34 Q15 40 10 35Z" fill="#2aa030"/>
<rect x="17.5" y="22.5" width="29" height="23" fill="#fff" stroke="#909498"/>
<g stroke="#2a6ad0" stroke-width="1.6" fill="none"><path d="M21 28 L23 30 L27 25"/><path d="M21 33 L23 35 L27 30"/><path d="M21 38 L23 40 L27 35"/></g>
<g stroke="#707880" stroke-width="1"><path d="M28 29.5 H42 M28 34.5 H42 M28 39.5 H42"/></g>
</svg>
<div class="t" style="left:275px;top:357px">Možnosti Internetu</div>
<svg class="a" style="left:4px;top:395px;filter:drop-shadow(1px 1.5px 1px rgba(0,0,0,.22))" width="48" height="48" viewBox="0 0 48 48">
<defs><linearGradient id="pwg" x1="0" y1="0" x2="1" y2="0"><stop offset="0" stop-color="#b8b8cc"/><stop offset=".35" stop-color="#ffffff"/><stop offset="1" stop-color="#8e8eb0"/></linearGradient>
<linearGradient id="pwo" x1="0" y1="0" x2="1" y2="0"><stop offset="0" stop-color="#f0b050"/><stop offset=".45" stop-color="#f07020"/><stop offset="1" stop-color="#a81818"/></linearGradient></defs>
<path d="M12 21 Q4 23 3 18 Q2.5 12 9 12.5" fill="none" stroke="#8a8a9a" stroke-width="3"/>
<path d="M30 19.5 Q39 17 40.5 24 L40.5 29" fill="none" stroke="#9a9aaa" stroke-width="3"/>
<rect x="11.5" y="4.5" width="20" height="29.5" rx="3.5" fill="url(#pwg)" stroke="#72728a" stroke-width="1"/>
<rect x="12" y="8.5" width="19" height="10" fill="url(#pwo)"/>
<ellipse cx="21.5" cy="5.5" rx="9.5" ry="3.2" fill="#f6f6f6" stroke="#9a9aaa" stroke-width=".7"/>
<ellipse cx="22.5" cy="5.5" rx="3.5" ry="1.6" fill="#f08040"/>
<path d="M28.5 35 Q32 25.5 42 26.5 Q49.5 28.5 47.5 38.5 Q46.5 40.5 43 39.5Z" fill="#a8a8e4" stroke="#5e5ea8" stroke-width="1"/>
<g stroke="#8a7a20" stroke-width="3.2" stroke-linecap="round"><path d="M34 36.5 L33 43"/><path d="M43 38.5 L42 45"/></g>
<g stroke="#e8d060" stroke-width="1.6" stroke-linecap="round"><path d="M34 36.5 L33 43"/><path d="M43 38.5 L42 45"/></g>
</svg>
<div class="t" style="left:57px;top:413px">Možnosti napájení</div>
<svg class="a" style="left:222px;top:395px;filter:drop-shadow(1px 1.5px 1px rgba(0,0,0,.22))" width="48" height="48" viewBox="0 0 48 48">
<path d="M5 10 Q5 7 8 7 L15 6 Q17 6 18 8 L33 7 Q36 7 36 10 L36 36 L5 42Z" fill="#f4d470" stroke="#b8962a" stroke-width=".8"/>
<path d="M9 22 Q18 21 24 19 L45 15 L37 36 L5 42Z" fill="#fbe59a" stroke="#b8962a" stroke-width=".8"/>
<path d="M20 26 L26 34 L33 15" fill="none" stroke="#a01818" stroke-width="2"/>
</svg>
<div class="t" style="left:275px;top:413px">Možnosti složky</div>
<svg class="a" style="left:4px;top:451px;filter:drop-shadow(1px 1.5px 1px rgba(0,0,0,.22))" width="48" height="48" viewBox="0 0 48 48">
<defs><linearGradient id="phb" x1="0" y1="0" x2="1" y2="0"><stop offset="0" stop-color="#d8d8d8"/><stop offset=".4" stop-color="#9a9a9a"/><stop offset="1" stop-color="#6a6a6a"/></linearGradient></defs>
<path d="M18 28 Q24 24 32 27.5" fill="none" stroke="#c8ccd8" stroke-width="2.2"/>
<rect x="4" y="1.5" width="5" height="9" rx="1.2" fill="#2a2a2a"/>
<rect x="2" y="9.5" width="17.5" height="20" rx="1.5" fill="url(#phb)" stroke="#4a4a4a" stroke-width=".8"/>
<rect x="3" y="11" width="3" height="18" fill="#ececec"/>
<path d="M9 14 Q13 11 17 14" fill="none" stroke="#c0c0c0" stroke-width="1"/>
<rect x="9" y="16.5" width="8" height="13" fill="#48cc30"/>
<rect x="10" y="17.5" width="4" height="8" fill="#7ae860"/>
<circle cx="4.5" cy="13.5" r="1" fill="#333"/>
</svg>
<div class="t" style="left:57px;top:469px">Možnosti telefonu a modemu</div>
<svg class="a" style="left:222px;top:451px;filter:drop-shadow(1px 1.5px 1px rgba(0,0,0,.22))" width="48" height="48" viewBox="0 0 48 48">
<circle cx="19.8" cy="6.6" r="5.2" fill="#117a11"/>
<path d="M15 12.2 H30 V18 H22.6 V25.5 H32 Q35 25.5 36 28 V30 H17.3 V18 H15Z" fill="#1a961a"/>
<path d="M1.5 30 Q3 15 17.3 12.2 V18.5 Q8.5 21 7.8 30Z" fill="#1a961a"/>
<path d="M17.3 18 V30" stroke="#128212" stroke-width=".8"/>
</svg>
<div class="t" style="left:275px;top:469px">Možnosti usnadnění</div>
<div class="a" style="left:47px;top:50px;width:128px;height:66px;background:#fff;border:1px solid #8c8c8c;box-shadow:2px 2px 2px rgba(0,0,0,.3)">
<div class="t" style="left:18px;top:4px">Vyjmout</div>
<div class="a" style="left:3px;top:22px;width:120px;height:1px;background:#a0a0a0"></div>
<div class="t" style="left:18px;top:30px;letter-spacing:0.05px">Vytvořit zástupce</div>
<div class="t" style="left:18px;top:47px">Odstranit</div>
</div>
</div>
<div id="sb" class="a">
  <div class="a" style="left:1px;top:1px;width:15px;height:477px;background:linear-gradient(90deg,#f3f1ec,#fefefb 60%,#f1efe6)"></div>
  <div class="a" style="left:2px;top:1px;width:14px;height:15px;border-radius:2px;background:linear-gradient(135deg,#d8e4fd,#bccffb);border:1px solid #fff"><svg class="a" style="left:3px;top:4px" width="8" height="6"><path d="M0.5 5 L4 1.5 L7.5 5" fill="none" stroke="#4d6185" stroke-width="2"/></svg></div>
  <div class="a" style="left:2px;top:18px;width:14px;height:200px;border-radius:2px;background:linear-gradient(90deg,#cdd9fc,#c3d3fb 50%,#b9cbf9);border:1px solid #fff;border-bottom:2px solid #7b8fc0"><div class="a" style="left:3px;top:95px;width:7px;height:1px;background:#8ea6e2"></div><div class="a" style="left:3px;top:97px;width:7px;height:1px;background:#8ea6e2"></div><div class="a" style="left:3px;top:99px;width:7px;height:1px;background:#8ea6e2"></div><div class="a" style="left:3px;top:101px;width:7px;height:1px;background:#8ea6e2"></div></div>
  <div class="a" style="left:2px;top:463px;width:14px;height:16px;border-radius:2px;background:linear-gradient(135deg,#d8e4fd,#bccffb);border:1px solid #fff"><svg class="a" style="left:3px;top:4px" width="8" height="6"><path d="M0.5 1 L4 4.5 L7.5 1" fill="none" stroke="#4d6185" stroke-width="2"/></svg></div>
</div>
<div class="a" style="left:0;top:29px;width:2px;height:569px;background:linear-gradient(90deg,#1a6cf4,#0a4ed6)"></div><div class="a" style="left:2px;top:29px;width:1px;height:566px;background:#e8f4ff"></div>
<div class="a" style="left:886px;top:29px;width:1px;height:566px;background:#e8f4ff"></div><div class="a" style="left:887px;top:29px;width:3px;height:569px;background:linear-gradient(90deg,#1a44bc,#1a4ac8 50%,#0024a8)"></div>
<div class="a" style="left:2px;top:594px;width:885px;height:1px;background:#e8f4ff"></div><div id="bottom" class="a"></div>
</body></html>
